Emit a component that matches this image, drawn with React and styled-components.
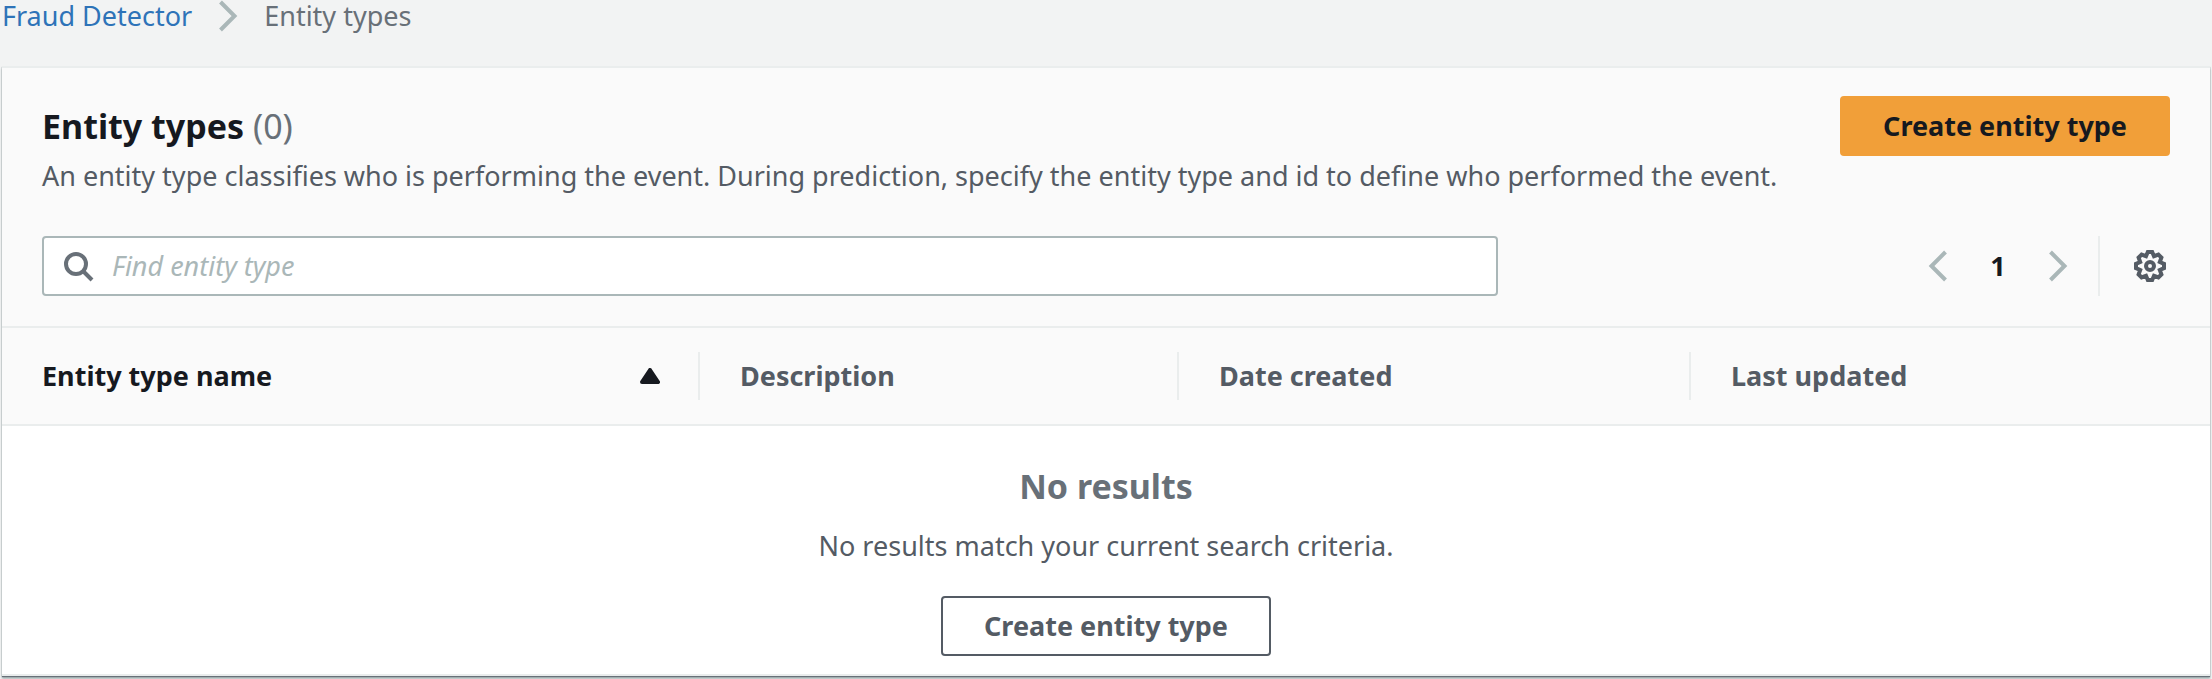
import React, { useState } from "react";
import styled, { createGlobalStyle } from "styled-components";

const columns = [
  { name: "Entity type name", width: "698px", sorted: true },
  { name: "Description", width: "479px" },
  { name: "Date created", width: "512px" },
  { name: "Last updated", width: "auto" },
];

const App = () => {
  const [query, setQuery] = useState("");

  return (
    <Layout>
      <GlobalStyle />
      <Breadcrumbs aria-label="Breadcrumbs">
        <a href="#fraud-detector">Fraud Detector</a>
        <Chevron />
        <span>Entity types</span>
      </Breadcrumbs>
      <Panel>
        <Header>
          <TitleRow>
            <div>
              <Title>
                Entity types <span>(0)</span>
              </Title>
              <Description>
                An entity type classifies who is performing the event. During
                prediction, specify the entity type and id to define who
                performed the event.
              </Description>
            </div>
            <Button $primary>Create entity type</Button>
          </TitleRow>
          <Tools>
            <Search>
              <SearchIcon />
              <input
                type="search"
                aria-label="Find entity type"
                placeholder="Find entity type"
                value={query}
                onChange={(e) => setQuery(e.target.value)}
              />
            </Search>
            <Pagination>
              <IconButton aria-label="Previous page" disabled>
                <Chevron $left />
              </IconButton>
              <Page aria-current="page">1</Page>
              <IconButton aria-label="Next page" disabled>
                <Chevron />
              </IconButton>
              <Divider />
              <IconButton aria-label="Preferences">
                <GearIcon />
              </IconButton>
            </Pagination>
          </Tools>
        </Header>
        <Table>
          <thead>
            <tr>
              {columns.map((column) => (
                <Column
                  key={column.name}
                  scope="col"
                  $width={column.width}
                  $sorted={column.sorted}
                  aria-sort={column.sorted ? "ascending" : undefined}
                >
                  <div>
                    {column.name}
                    {column.sorted && <SortIcon />}
                  </div>
                </Column>
              ))}
            </tr>
          </thead>
          <tbody>
            <tr>
              <Empty colSpan={columns.length}>
                <h2>No results</h2>
                <p>No results match your current search criteria.</p>
                <Button>Create entity type</Button>
              </Empty>
            </tr>
          </tbody>
        </Table>
      </Panel>
    </Layout>
  );
};

const Chevron = ({ $left }) => (
  <svg width="20" height="32" viewBox="0 0 20 32" fill="none" aria-hidden="true">
    <path
      d={$left ? "M17.500 2L3.500 16L17.500 30" : "M2.500 2L16.500 16L2.500 30"}
      stroke="#aab7b8"
      strokeWidth="4"
    />
  </svg>
);

const SearchIcon = () => (
  <svg width="32" height="32" viewBox="0 0 32 32" fill="none" aria-hidden="true">
    <circle cx="14" cy="14" r="10" stroke="#687078" strokeWidth="4" />
    <path d="M21 21L30 30" stroke="#687078" strokeWidth="4" />
  </svg>
);

const GearIcon = () => (
  <svg width="32" height="32" viewBox="0 0 32 32" fill="none" aria-hidden="true">
    <path
      d="M13.800 2L18.200 2L20 6.200L24.400 4.600L27.400 7.600L25.800 12L30 13.800L30 18.200L25.800 20L27.400 24.400L24.400 27.400L20 25.800L18.200 30L13.800 30L12 25.800L7.600 27.400L4.600 24.400L6.200 20L2 18.200L2 13.800L6.200 12L4.600 7.600L7.600 4.600L12 6.200Z"
      stroke="#545b64"
      strokeWidth="4"
    />
    <circle cx="16" cy="16" r="4" stroke="#545b64" strokeWidth="4" />
  </svg>
);

const SortIcon = () => (
  <svg width="20" height="16" viewBox="0 0 20 16" aria-hidden="true">
    <path
      d="M10 2L18 14H2z"
      fill="#16191f"
      stroke="#16191f"
      strokeWidth="4"
      strokeLinejoin="round"
    />
  </svg>
);

const GlobalStyle = createGlobalStyle`
  * {
    box-sizing: border-box;
    margin: 0;
  }
  body {
    background: #f2f3f3;
    color: #545b64;
    font-family: "Noto Sans", "Open Sans", sans-serif;
    font-size: 27px;
    line-height: 36px;
  }
  button,
  input {
    font: inherit;
  }
  svg {
    display: block;
    flex-shrink: 0;
  }
`;

const Layout = styled.div`
  min-height: 100vh;
  background: #f2f3f3;
`;

const Breadcrumbs = styled.nav`
  display: flex;
  align-items: center;
  gap: 26px;
  height: 66px;
  padding: 0 2px 34px;
  color: #687078;
  a {
    color: #2e73b8;
    text-decoration: none;
  }
`;

const Panel = styled.main`
  margin: 0 2px;
  background: white;
  border-top: 2px solid #eaeded;
  border-bottom: 2px solid #eaeded;
  box-shadow: 0 1px 1px #687078, 0 3px 2px #aab7b8;
`;

const Header = styled.header`
  padding: 28px 40px 30px;
  background: #fafafa;
  border-bottom: 2px solid #eaeded;
`;

const TitleRow = styled.div`
  display: flex;
  align-items: flex-start;
  justify-content: space-between;
  gap: 40px;
  margin-bottom: 40px;
`;

const Title = styled.h1`
  padding-top: 8px;
  color: #16191f;
  font-size: 34px;
  line-height: 44px;
  span {
    color: #687078;
    font-weight: 400;
  }
`;

const Description = styled.p`
  padding: 10px 0 2px;
`;

const Button = styled.button`
  display: block;
  flex-shrink: 0;
  height: 60px;
  padding: 0 41px;
  border: 2px solid ${({ $primary }) => ($primary ? "#f19f39" : "#545b64")};
  border-radius: 4px;
  background: ${({ $primary }) => ($primary ? "#f19f39" : "white")};
  color: ${({ $primary }) => ($primary ? "#16191f" : "#545b64")};
  font-weight: 700;
`;

const Tools = styled.div`
  display: flex;
  align-items: center;
  justify-content: space-between;
`;

const Search = styled.label`
  display: flex;
  align-items: center;
  gap: 18px;
  width: 68.4%;
  height: 60px;
  padding: 0 18px;
  border: 2px solid #aab7b8;
  border-radius: 4px;
  background: white;
  input {
    flex: 1;
    padding: 0;
    border: 0;
    outline: 0;
    background: none;
    color: #16191f;
  }
  input::placeholder {
    color: #aab7b8;
    font-style: italic;
    opacity: 1;
  }
`;

const Pagination = styled.div`
  display: flex;
  align-items: center;
`;

const IconButton = styled.button`
  padding: 0 4px;
  border: 0;
  background: none;
`;

const Page = styled.span`
  width: 92px;
  color: #16191f;
  font-weight: 700;
  text-align: center;
`;

const Divider = styled.span`
  width: 2px;
  height: 60px;
  margin: 0 30px 0 26px;
  background: #eaeded;
`;

const Table = styled.table`
  width: 100%;
  border-collapse: separate;
  border-spacing: 0;
  table-layout: fixed;
`;

const Column = styled.th`
  width: ${({ $width }) => $width};
  padding: 24px 0;
  background: #fafafa;
  border-bottom: 2px solid #eaeded;
  color: ${({ $sorted }) => ($sorted ? "#16191f" : "#545b64")};
  text-align: left;
  div {
    display: flex;
    align-items: center;
    justify-content: space-between;
    height: 48px;
    padding: 0 38px 0 40px;
    border-right: 2px solid #eaeded;
  }
  &:last-child div {
    border-right: 0;
  }
`;

const Empty = styled.td`
  padding: 38px 40px 18px;
  text-align: center;
  h2 {
    color: #687078;
    font-size: 34px;
    line-height: 44px;
  }
  p {
    padding: 20px 0 32px;
  }
  button {
    margin: 0 auto;
  }
`;

export default App;
